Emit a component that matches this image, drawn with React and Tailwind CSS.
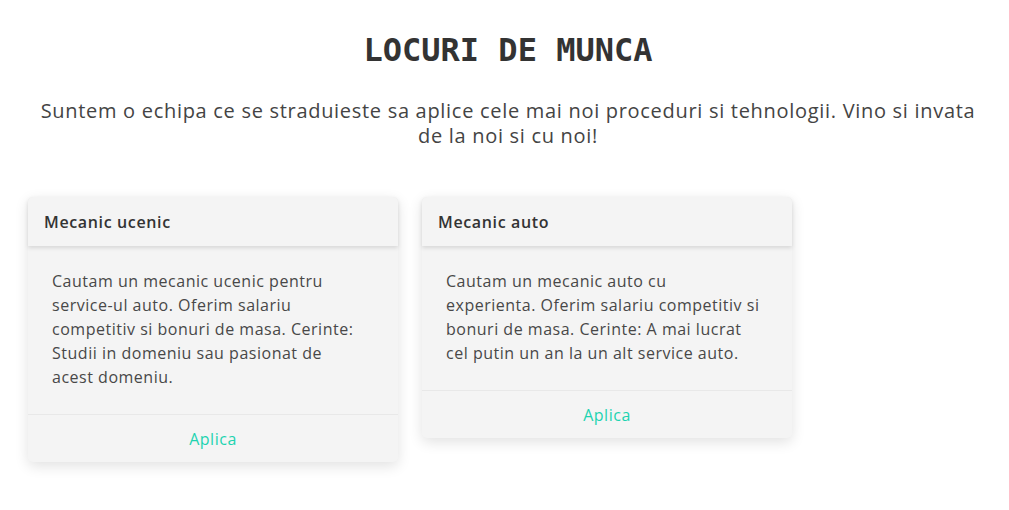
const jobs = [
  {
    title: "Mecanic ucenic",
    lines: [
      "Cautam un mecanic ucenic pentru",
      "service-ul auto. Oferim salariu",
      "competitiv si bonuri de masa. Cerinte:",
      "Studii in domeniu sau pasionat de",
      "acest domeniu.",
    ],
  },
  {
    title: "Mecanic auto",
    lines: [
      "Cautam un mecanic auto cu",
      "experienta. Oferim salariu competitiv si",
      "bonuri de masa. Cerinte: A mai lucrat",
      "cel putin un an la un alt service auto.",
    ],
  },
];

function JobCard({ title, lines }) {
  return (
    <div className="w-[370px] rounded-[5px] bg-[#f4f4f4] shadow-[0_4px_14px_rgba(0,0,0,0.12)]">
      {/* Header */}
      <div className="h-[49px] flex items-center px-4 rounded-t-[5px] bg-[#f4f4f4] shadow-[0_2px_4px_rgba(0,0,0,0.12)] text-[16px] font-semibold tracking-[0.04em] text-[#333]">
        {title}
      </div>
      {/* Body */}
      <div className="px-6 pt-[23px] pb-[25px] text-[16px] leading-6 tracking-[0.032em] text-[#484848]">
        <p>
          {lines.map((l) => (
            <span key={l} className="block whitespace-nowrap">
              {l}
            </span>
          ))}
        </p>
      </div>
      {/* Footer */}
      <div className="h-[48px] flex items-center justify-center border-t border-[#e8e8e8] text-[16px] tracking-[0.032em] text-[#1dd3b0]">
        Aplica
      </div>
    </div>
  );
}

export default function App() {
  return (
    <div className="min-h-screen bg-white pl-[28px] pr-[21px] pt-[30px] font-['Open_Sans',sans-serif]">
      <h1 className="text-center font-['DejaVu_Sans_Mono',monospace] font-bold text-[32px] leading-10 text-[#333]">
        LOCURI DE MUNCA
      </h1>
      <p className="mt-[28px] px-2 text-center text-[20px] leading-[25px] tracking-[0.035em] text-[#444]">
        Suntem o echipa ce se straduieste sa aplice cele mai noi proceduri si tehnologii. Vino si invata de la noi si cu noi!
      </p>
      <div className="mt-[49px] flex items-start gap-6">
        {jobs.map((j) => (
          <JobCard key={j.title} {...j} />
        ))}
      </div>
    </div>
  );
}
